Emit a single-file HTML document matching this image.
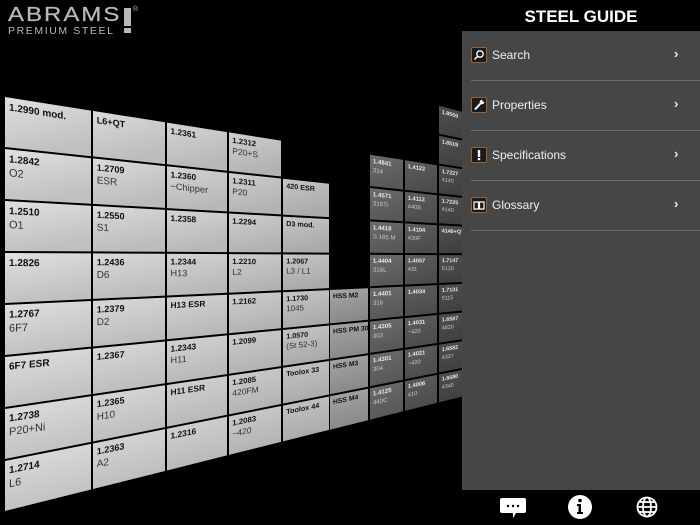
<!DOCTYPE html>
<html><head><meta charset="utf-8">
<style>
html,body{margin:0;padding:0;background:#000;width:700px;height:525px;overflow:hidden;font-family:"Liberation Sans",sans-serif}
#wall{position:absolute;left:0;top:0}
.logo{position:absolute;left:8px;top:5px;color:#b8b8b8}
.logo .a{font-size:24px;letter-spacing:2px;font-weight:normal;line-height:24px;-webkit-text-stroke:0.3px #b8b8b8;transform:scaleY(0.85);transform-origin:left top}
.logo .p{font-size:10.5px;letter-spacing:1.6px;line-height:11px;margin-top:-3px}
.bang{position:absolute;left:124px;top:8px;width:7px;height:18px;background:#b8b8b8}
.bang2{position:absolute;left:124px;top:28px;width:7px;height:5px;background:#b8b8b8}
.reg{position:absolute;left:133px;top:6px;font-size:7px;color:#b8b8b8}
.hdr{position:absolute;left:462px;top:0;width:238px;height:31px;background:#000;color:#fff;font-weight:bold;font-size:17px;text-align:center;line-height:33px}
.panel{position:absolute;left:462px;top:31px;width:238px;height:459px;background:#464646}
.item{position:absolute;left:9px;width:229px;height:49px;border-bottom:1.5px solid #6c6c6c;color:#eee;font-size:12px}
.item .ic{position:absolute;left:0;top:16px;width:14px;height:14px;border:1px solid #a0622a;border-radius:2px;background:#1a1a1a}
.item .t{position:absolute;left:21px;top:17px}
.item .c{position:absolute;left:203px;top:15px;font-size:13px;font-weight:bold}
.bot{position:absolute;left:462px;top:490px;width:238px;height:35px;background:#000}
</style></head><body>
<svg id="wall" width="700" height="525" xmlns="http://www.w3.org/2000/svg"></svg>
<div class="logo"><div class="a">ABRAMS</div><div class="p">PREMIUM STEEL</div></div>
<div class="bang"></div><div class="bang2"></div><div class="reg">®</div>
<div class="hdr">STEEL GUIDE</div>
<div class="panel">
 <div class="item" style="top:0">
  <div class="ic"><svg width="14" height="14"><circle cx="8" cy="6" r="3.2" fill="none" stroke="#fff" stroke-width="1.3"/><line x1="5.6" y1="8.4" x2="2.5" y2="11.5" stroke="#fff" stroke-width="1.5"/></svg></div>
  <div class="t">Search</div><div class="c">›</div></div>
 <div class="item" style="top:50px">
  <div class="ic"><svg width="14" height="14"><line x1="3" y1="11.5" x2="9" y2="5" stroke="#fff" stroke-width="2"/><circle cx="10" cy="4" r="2.3" fill="#fff"/><circle cx="11.3" cy="2.7" r="1" fill="#1a1a1a"/></svg></div>
  <div class="t">Properties</div><div class="c">›</div></div>
 <div class="item" style="top:100px">
  <div class="ic"><svg width="14" height="14"><rect x="5.8" y="2" width="2.4" height="7" fill="#fff"/><rect x="5.8" y="10" width="2.4" height="2.2" fill="#fff"/></svg></div>
  <div class="t">Specifications</div><div class="c">›</div></div>
 <div class="item" style="top:150px">
  <div class="ic"><svg width="14" height="14"><path d="M2 4h4.5v7H2zM7.5 4H12v7H7.5z" fill="none" stroke="#fff" stroke-width="1.2"/></svg></div>
  <div class="t">Glossary</div><div class="c">›</div></div>
</div>
<div class="bot">
 <svg width="238" height="35" style="position:absolute;left:0;top:0">
  <path d="M40 8h22a2 2 0 0 1 2 2v11a2 2 0 0 1-2 2h-8l-3 5v-5H40a2 2 0 0 1-2-2V10a2 2 0 0 1 2-2z" fill="#fff"/>
  <circle cx="46" cy="16" r="1.2" fill="#000"/><circle cx="51" cy="16" r="1.2" fill="#000"/><circle cx="56" cy="16" r="1.2" fill="#000"/>
  <circle cx="118" cy="17" r="12" fill="#fff"/>
  <circle cx="118" cy="10.5" r="1.8" fill="#000"/><path d="M115 14h4v8h2v2h-6v-2h1.5v-6H115z" fill="#000"/>
  <g fill="none" stroke="#fff" stroke-width="1.8"><circle cx="185" cy="17" r="9.5"/><ellipse cx="185" cy="17" rx="4" ry="9.5"/><line x1="175.5" y1="17" x2="194.5" y2="17"/><path d="M177 12h16M177 22h16"/></g>
 </svg>
</div>
<script>
(function(){
var svg=document.getElementById('wall'),NS='http://www.w3.org/2000/svg';
var vx=1024,vy=257,x0=5;
function s(x){return (vx-x)/(vx-x0);}
function Y(k,x){return vy+(96+52*k-vy)*s(x);}
var cols=[[5,91],[93,165],[167,227],[229,281],[283,329],[330,368],[370,403],[405,437],[439,470]];
var data=[
[[0,"1.2990 mod.",""],[1,"1.2842","O2"],[2,"1.2510","O1"],[3,"1.2826",""],[4,"1.2767","6F7"],[5,"6F7 ESR",""],[6,"1.2738","P20+Ni"],[7,"1.2714","L6"]],
[[0,"L6+QT",""],[1,"1.2709","ESR"],[2,"1.2550","S1"],[3,"1.2436","D6"],[4,"1.2379","D2"],[5,"1.2367",""],[6,"1.2365","H10"],[7,"1.2363","A2"]],
[[0,"1.2361",""],[1,"1.2360","~Chipper"],[2,"1.2358",""],[3,"1.2344","H13"],[4,"H13 ESR",""],[5,"1.2343","H11"],[6,"H11 ESR",""],[7,"1.2316",""]],
[[0,"1.2312","P20+S"],[1,"1.2311","P20"],[2,"1.2294",""],[3,"1.2210","L2"],[4,"1.2162",""],[5,"1.2099",""],[6,"1.2085","420FM"],[7,"1.2083","~420"]],
[[1,"420 ESR",""],[2,"D3 mod.",""],[3,"1.2067","L3 / L1"],[4,"1.1730","1045"],[5,"1.0570","(St 52-3)"],[6,"Toolox 33",""],[7,"Toolox 44",""]],
[[4,"HSS M2",""],[5,"HSS PM 30",""],[6,"HSS M3",""],[7,"HSS M4",""]],
[[0,"1.4841","314"],[1,"1.4571","316Ti"],[2,"1.4418","S 165 M"],[3,"1.4404","316L"],[4,"1.4401","316"],[5,"1.4305","303"],[6,"1.4301","304"],[7,"1.4125","440C"]],
[[0,"1.4122",""],[1,"1.4112","440B"],[2,"1.4104","430F"],[3,"1.4057","431"],[4,"1.4034",""],[5,"1.4031","~420"],[6,"1.4021","~420"],[7,"1.4006","410"]],
[[-2,"1.8550",""],[-1,"1.8519",""],[0,"1.7227","4140"],[1,"1.7225","4140"],[2,"4140+QT",""],[3,"1.7147","5120"],[4,"1.7131","5115"],[5,"1.6587","4820"],[6,"1.6582","4337"],[7,"1.6580","4340"]]
];
var fills=[["#e0e0e0","#c0c0c0"],["#dadada","#bcbcbc"],["#d4d4d4","#b8b8b8"],["#cecece","#b2b2b2"],["#c6c6c6","#aaaaaa"],["#a8a8a8","#888888"],["#6c6c6c","#585858"],["#5e5e5e","#4c4c4c"],["#505050","#404040"]];
var defs=document.createElementNS(NS,'defs');svg.appendChild(defs);
fills.forEach(function(f,i){var g=document.createElementNS(NS,'linearGradient');g.setAttribute('id','g'+i);g.setAttribute('x1','0');g.setAttribute('y1','0');g.setAttribute('x2','0.3');g.setAttribute('y2','1');
 g.innerHTML='<stop offset="0" stop-color="'+f[0]+'"/><stop offset="1" stop-color="'+f[1]+'"/>';defs.appendChild(g);});
data.forEach(function(col,ci){
 var a=cols[ci][0],b=cols[ci][1];
 col.forEach(function(t){
  var k=t[0];
  var p=document.createElementNS(NS,'polygon');
  var pts=[[a,Y(k,a)+1],[b,Y(k,b)+1],[b,Y(k+1,b)-1],[a,Y(k+1,a)-1]];
  p.setAttribute('points',pts.map(function(q){return q[0].toFixed(1)+','+q[1].toFixed(1)}).join(' '));
  p.setAttribute('fill','url(#g'+ci+')');svg.appendChild(p);
  var sc=s(a+3), slope=-(96+52*k-vy)/(vx-x0);
  var tx=a+3*sc+1, ty=Y(k,a+3)+14*sc;
  var dark=ci>=6, col1=dark?'#e8e8e8':'#111', col2=dark?'#c8c8c8':'#333';
  var fs=(dark?9.5:10)*sc;
  var g=document.createElementNS(NS,'g');
  g.setAttribute('transform','matrix(1,'+slope.toFixed(4)+',0,1,'+tx.toFixed(1)+','+ty.toFixed(1)+')');
  var t1=document.createElementNS(NS,'text');t1.setAttribute('font-size',fs.toFixed(1));t1.setAttribute('font-weight','bold');t1.setAttribute('fill',col1);t1.setAttribute('font-family','Liberation Sans, sans-serif');t1.textContent=t[1];g.appendChild(t1);
  if(t[2]){var t2=document.createElementNS(NS,'text');t2.setAttribute('y',(14*sc).toFixed(1));t2.setAttribute('font-size',((dark?9.5:11)*sc).toFixed(1));t2.setAttribute('fill',col2);t2.setAttribute('font-family','Liberation Sans, sans-serif');t2.textContent=t[2];g.appendChild(t2);}
  svg.appendChild(g);
 });
});
})();
</script>
</body></html>
